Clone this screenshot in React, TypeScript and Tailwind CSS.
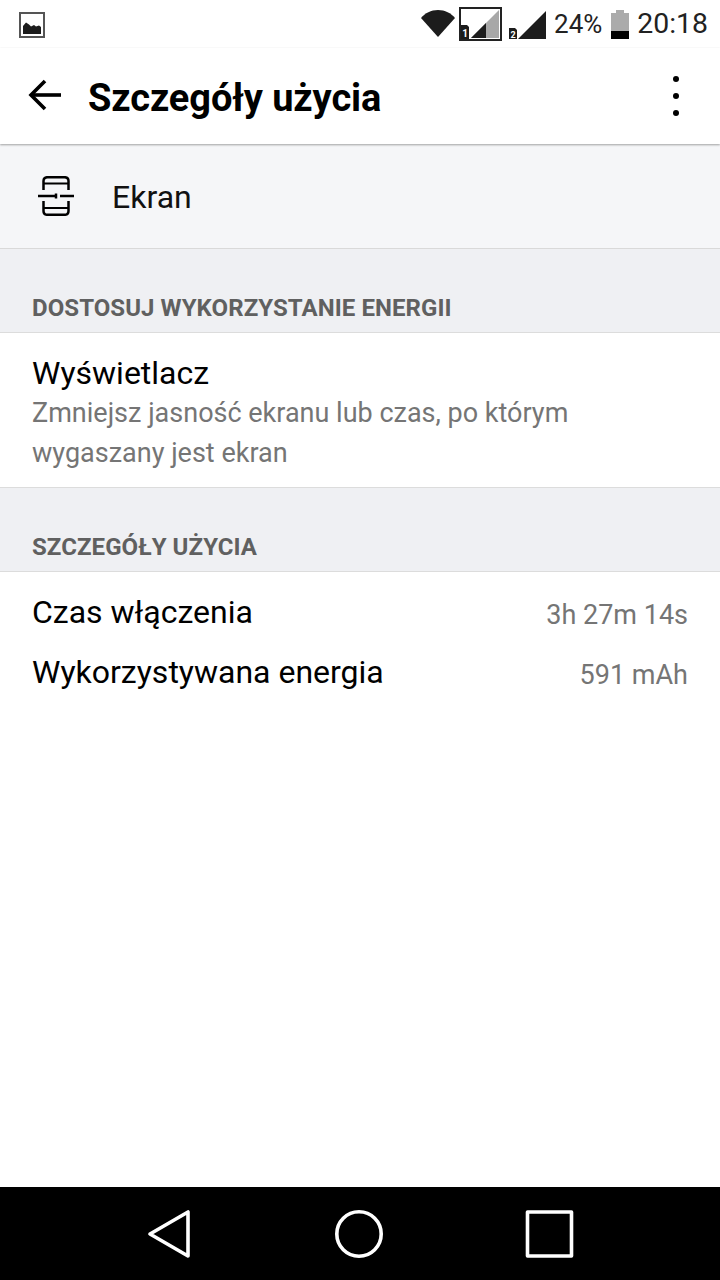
export default function App() {
  return (
    <div className="w-[720px] h-[1280px] flex flex-col bg-white font-['Roboto',sans-serif] overflow-hidden">
      <div className="h-12 flex items-center justify-between pl-[19px] pr-[12px] text-[#222]">
        <svg width="26" height="26" viewBox="0 0 26 26" className="mt-[1px]">
          <rect x="1" y="1" width="24" height="24" fill="none" stroke="#555" strokeWidth="2" />
          <path d="M4 22V14L7 10.5L10 12.5L12 14.5L15 13L17 14.5L20 13.5L22 15V22Z" fill="#1c1c1c" />
        </svg>
        <div className="flex items-center">
          <svg width="36" height="30" viewBox="0 0 36 30">
            <path d="M1 11C5 6 11 3 18 3C25 3 31 6 35 11L18 30Z" fill="#1c1c1c" transform="translate(0 -2)" />
          </svg>
          <svg width="43" height="34" viewBox="0 0 43 34" className="ml-[3px]">
            <rect x="1" y="1" width="41" height="32" fill="white" stroke="#222" strokeWidth="2" />
            <path d="M12 31L40 3V31Z" fill="#a8a8a8" />
            <path d="M12 31L27 16V31Z" fill="#1c1c1c" />
            <path d="M2 18H8L10 20V32H2Z" fill="#1c1c1c" />
            <text x="6" y="30" textAnchor="middle" fontSize="10" fontWeight="700" fill="#fff" fontFamily="Roboto, sans-serif">1</text>
          </svg>
          <svg width="37" height="30" viewBox="0 0 37 30" className="ml-[7px] mt-[1px]">
            <path d="M9 29L37 1V29Z" fill="#1c1c1c" />
            <path d="M0 18H6L8 20V29H0Z" fill="#1c1c1c" />
            <text x="4" y="28" textAnchor="middle" fontSize="9" fontWeight="700" fill="#fff" fontFamily="Roboto, sans-serif">2</text>
          </svg>
          <span className="ml-[8px] text-[26px] leading-none">24%</span>
          <svg width="18" height="29" viewBox="0 0 18 29" className="ml-[9px]">
            <path d="M5 0H13V3H18V29H0V3H5Z" fill="#ababab" />
            <rect x="0" y="21" width="18" height="8" fill="#000" />
          </svg>
          <span className="ml-[8px] text-[28.4px] leading-none">20:18</span>
        </div>
      </div>

      <div className="h-[96px] flex items-center pl-[28px] pr-[41px] relative z-10 bg-white shadow-[0_1px_2px_rgba(0,0,0,0.35)]">
        <svg width="34" height="32" viewBox="0 0 34 32" fill="none" stroke="#000" strokeWidth="3.6" className="-mt-[2px]">
          <path d="M33 16H3" />
          <path d="M17 2L3 16L17 30" />
        </svg>
        <h1 className="ml-[26px] text-[38px] font-bold text-black leading-none tracking-[-0.1px] mt-[3px]">Szczegóły użycia</h1>
        <div className="ml-auto flex flex-col gap-[11px]">
          <span className="w-[6px] h-[6px] rounded-full bg-black" />
          <span className="w-[6px] h-[6px] rounded-full bg-black" />
          <span className="w-[6px] h-[6px] rounded-full bg-black" />
        </div>
      </div>

      <div className="h-[105px] flex items-center pl-[38px] bg-[#f5f6f8] border-b border-[#d9d9d9]">
        <svg width="36" height="40" viewBox="0 0 36 40" fill="none" stroke="#000" strokeWidth="2.500" className="-mt-[1px]">
          <path d="M5.500 14V5Q5.500 1.200 9.500 1.200H26.500Q30.500 1.200 30.500 5V14" />
          <path d="M5.500 25V35Q5.500 38.800 9.500 38.800H26.500Q30.500 38.800 30.500 35V25" />
          <path d="M5.500 7.500H30.500M5.500 32H30.500" strokeWidth="2" />
          <path d="M0 20H18M22 20H36" />
          <path d="M18 17.500V22.500" />
        </svg>
        <span className="ml-[38px] text-[32px] text-[#111] mt-[2px]">Ekran</span>
      </div>

      <div className="h-[84px] flex items-end pb-[12px] pl-[32px] bg-[#eff0f3] border-b border-[#dcdcdc] text-[24px] font-bold text-[#606060] leading-[24px] tracking-[0.07px]">
        DOSTOSUJ WYKORZYSTANIE ENERGII
      </div>

      <div className="h-[155px] pl-[32px] pt-[20px] border-b border-[#dcdcdc]">
        <div className="text-[32px] leading-[40px] text-black">Wyświetlacz</div>
        <div className="text-[27px] leading-[40px] text-[#757575]">
          Zmniejsz jasność ekranu lub czas, po którym
          <br />
          wygaszany jest ekran
        </div>
      </div>

      <div className="h-[84px] flex items-end pb-[12px] pl-[32px] bg-[#eff0f3] border-b border-[#dcdcdc] text-[24px] font-bold text-[#606060] leading-[24px] tracking-[0.07px]">
        SZCZEGÓŁY UŻYCIA
      </div>

      <div className="flex-1 px-[32px] pt-[20px]">
        <div className="h-[60px] flex items-start justify-between">
          <span className="text-[32px] leading-[40px] text-black">Czas włączenia</span>
          <span className="text-[27px] leading-[46px] text-[#757575]">3h 27m 14s</span>
        </div>
        <div className="h-[60px] flex items-start justify-between">
          <span className="text-[32px] leading-[40px] text-black">Wykorzystywana energia</span>
          <span className="text-[27px] leading-[47px] text-[#757575]">591 mAh</span>
        </div>
      </div>

      <div className="h-[93px] bg-black flex items-center relative">
        <div className="w-full flex items-center pl-[147px]">
          <svg width="44" height="50" viewBox="0 0 44 50" fill="none" stroke="#fff" strokeWidth="3.6" strokeLinejoin="round">
            <path d="M41 3V47L3 25Z" />
          </svg>
          <svg width="50" height="50" viewBox="0 0 50 50" fill="none" stroke="#fff" strokeWidth="3.6" className="ml-[143px]">
            <circle cx="25" cy="25" r="22.200" />
          </svg>
          <svg width="50" height="50" viewBox="0 0 50 50" fill="none" stroke="#fff" strokeWidth="3.6" strokeLinejoin="round" className="ml-[141px]">
            <rect x="2.500" y="3" width="44" height="44" />
          </svg>
        </div>
      </div>
    </div>
  );
}
